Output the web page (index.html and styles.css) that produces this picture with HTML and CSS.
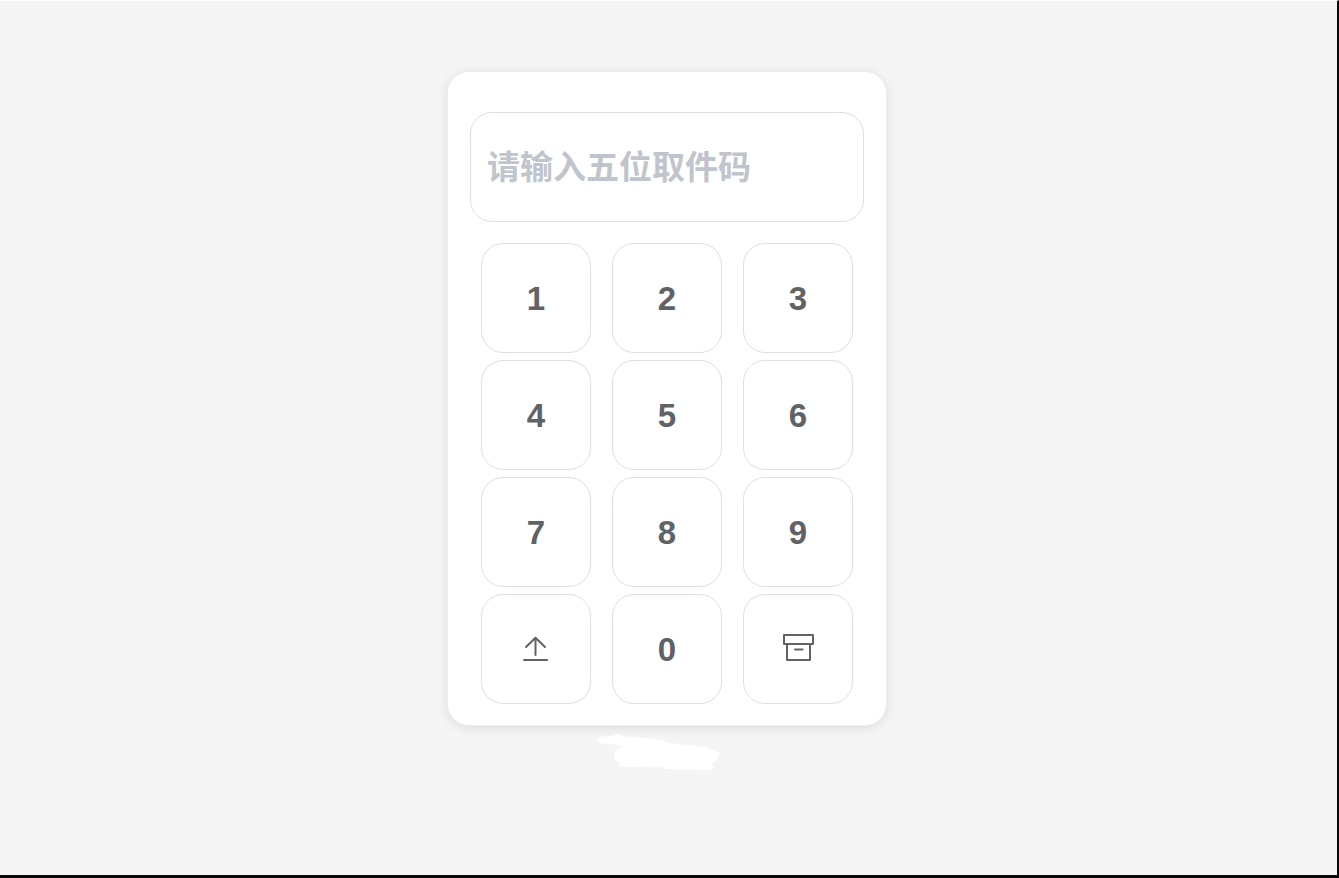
FILE: index.html
```html
<!DOCTYPE html>
<html lang="zh-CN">
<head>
    <meta charset="UTF-8">
    <meta name="viewport" content="width=device-width, initial-scale=1.0">
    <title>取件</title>
    <link rel="stylesheet" href="styles.css">
</head>
<body>
    <main class="page">
        <form class="card">
            <input class="code-input" type="text" inputmode="numeric" maxlength="5" placeholder="请输入五位取件码" aria-label="取件码">

            <div class="keypad">
                <button type="button" class="key">1</button>
                <button type="button" class="key">2</button>
                <button type="button" class="key">3</button>
                <button type="button" class="key">4</button>
                <button type="button" class="key">5</button>
                <button type="button" class="key">6</button>
                <button type="button" class="key">7</button>
                <button type="button" class="key">8</button>
                <button type="button" class="key">9</button>
                <button type="button" class="key" aria-label="上传">
                    <svg class="icon" viewBox="0 0 34 34" aria-hidden="true">
                        <path d="M5 27H28M16.5 5V22M7 14L16.5 4.8L26 14"/>
                    </svg>
                </button>
                <button type="button" class="key">0</button>
                <button type="button" class="key" aria-label="取件箱">
                    <svg class="icon" viewBox="0 0 34 34" aria-hidden="true">
                        <path d="M3 2H32V11H3ZM6 11V27H29V11M14 16.5H21.5"/>
                    </svg>
                </button>
            </div>
        </form>

        <svg class="smudge" viewBox="0 0 140 55" aria-hidden="true">
            <path d="M8 14Q8 11 12 10.5L22 10Q26 7 33 10L68 13.5Q74 14 80 17L112 20.5Q116 20 120 24Q129 23 129 29Q128 34 122 37Q125 41 121 44L75 43L70 41L50 40.5L50 41H33Q29 41 29 36Q24 35 24 29Q25 24 32 20L22 18H12Q8 17 8 14Z"/>
        </svg>
    </main>
</body>
</html>
```
FILE: styles.css
```css
* {
    margin: 0;
    padding: 0;
    box-sizing: border-box;
}

body {
    font-family: "Liberation Sans", "Noto Sans CJK SC", sans-serif;
    background: #f5f5f5;
    color: #606266;
}

.page {
    min-height: 100vh;
    padding: 70px 3px 0 0;
    border-top: 1px solid #fff;
    border-right: 2px solid #0b0b0d;
    border-bottom: 3px solid #0b0b0d;
    display: flex;
    flex-direction: column;
    align-items: center;
}

.card {
    width: 100%;
    max-width: 440px;
    padding: 40px 22px 21px;
    background: #fff;
    border: 1px solid #ebeef5;
    border-radius: 22px;
    box-shadow: 0 2px 12px rgba(0, 0, 0, 0.1);
}

.code-input {
    display: block;
    width: 100%;
    height: 110px;
    padding: 2px 16px 0;
    margin-bottom: 21px;
    border: 1px solid #dcdfe6;
    border-radius: 22px;
    background: #fff;
    color: #606266;
    font-family: inherit;
    font-size: 33px;
    font-weight: bold;
    outline: none;
}

.code-input::placeholder {
    color: #c0c4cc;
    opacity: 1;
}

.keypad {
    display: grid;
    grid-template-columns: repeat(3, 1fr);
    gap: 7px 21px;
    padding: 0 11px;
}

.key {
    height: 110px;
    padding-top: 2px;
    display: flex;
    align-items: center;
    justify-content: center;
    background: #fff;
    border: 1px solid #dcdfe6;
    border-radius: 22px;
    color: #606266;
    font-family: inherit;
    font-size: 33px;
    font-weight: bold;
    cursor: pointer;
}

.key:hover,
.code-input:focus {
    border-color: #409eff;
}

.icon {
    width: 34px;
    height: 34px;
    fill: none;
    stroke: #606266;
    stroke-width: 2;
    stroke-linecap: round;
    stroke-linejoin: round;
}

.smudge {
    width: 140px;
    height: 55px;
    margin-right: 14px;
    fill: #fff;
}
```
